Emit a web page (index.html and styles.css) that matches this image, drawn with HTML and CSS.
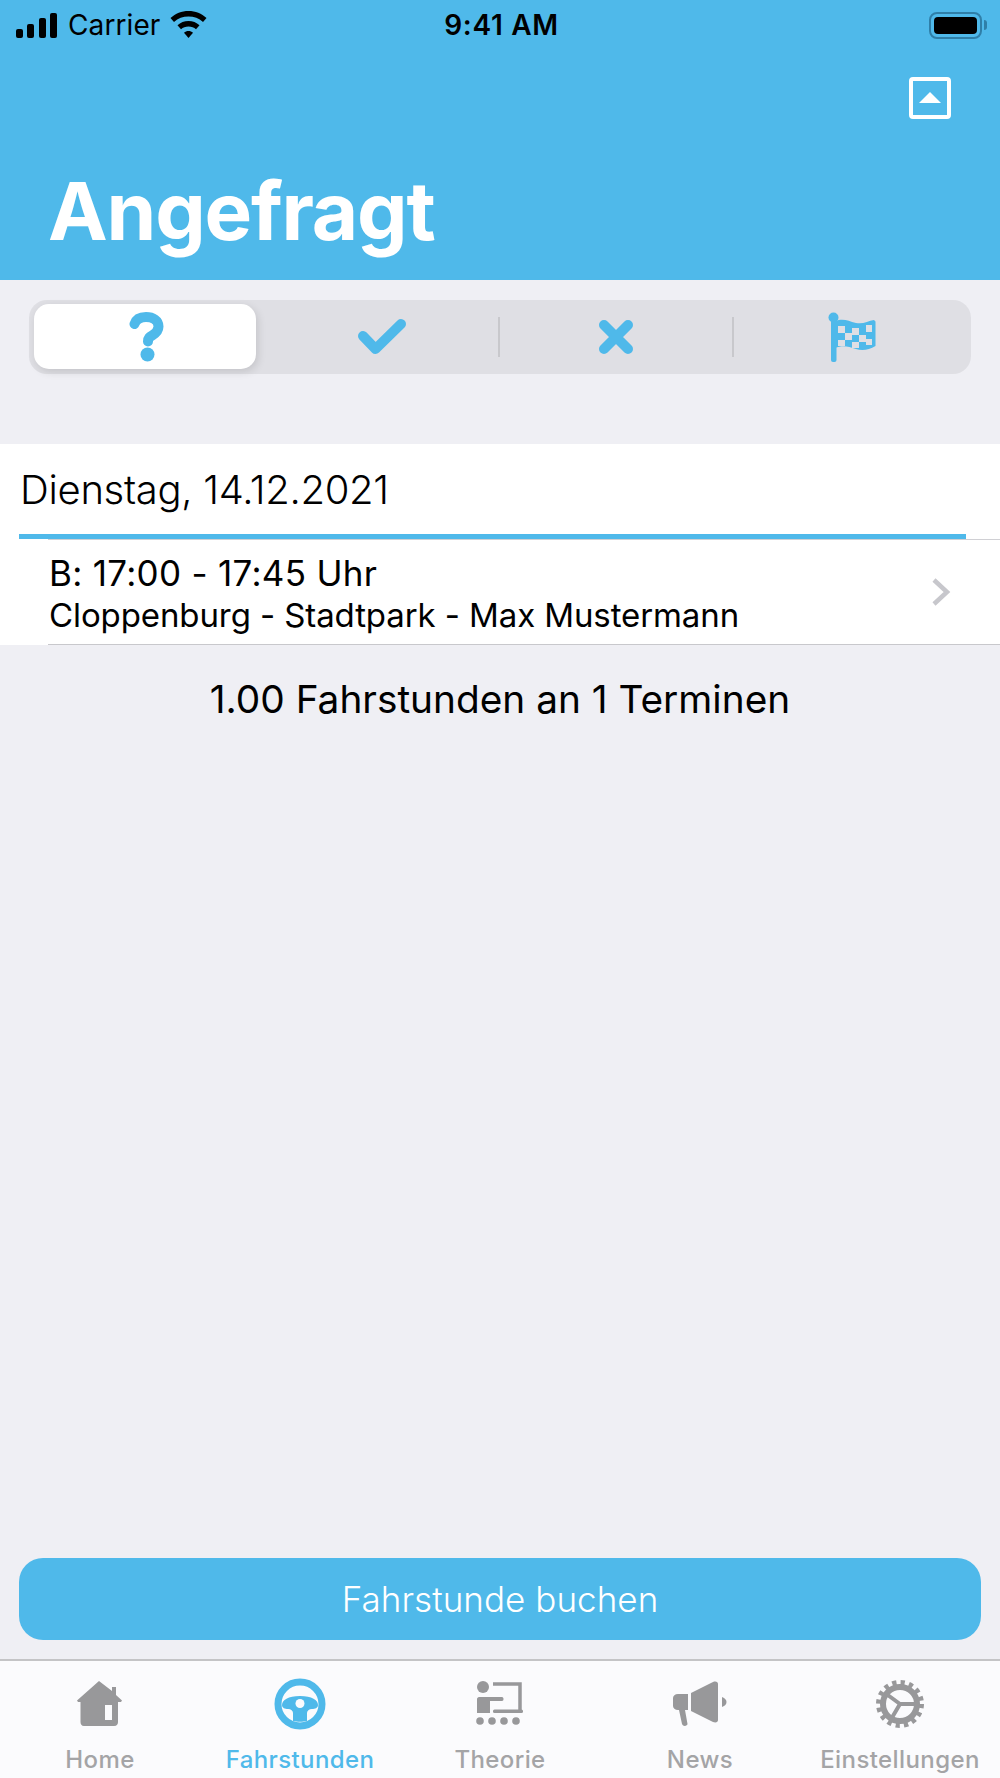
FILE: index.html
```html
<!DOCTYPE html>
<html lang="de">
<head>
  <meta charset="UTF-8">
  <title>Angefragt</title>
  <link rel="stylesheet" href="styles.css">
</head>
<body>
  <div class="app">
    <header class="header">
      <div class="status-bar">
        <div class="status-left">
          <svg class="signal" width="42" height="25" viewBox="0 0 42 25">
            <rect x="0" y="16" width="7" height="9" rx="2"/>
            <rect x="11" y="11" width="7" height="14" rx="2"/>
            <rect x="23" y="5" width="7" height="20" rx="2"/>
            <rect x="34" y="0" width="7" height="25" rx="2"/>
          </svg>
          <span class="carrier">Carrier</span>
          <svg class="wifi" width="37" height="27" viewBox="0 0 37 27">
            <path d="M18.5 0C11.500 0 5.500 2.500 0.500 7L4 11C8 7.300 13 5.500 18.500 5.500S29 7.300 33 11L36.500 7C31.500 2.500 25.500 0 18.500 0Z"/>
            <path d="M18.500 10C14.300 10 10.500 11.500 7.500 14.300L11 18.200C13 16.400 15.500 15.400 18.500 15.400S24 16.400 26 18.200L29.500 14.300C26.500 11.500 22.700 10 18.500 10Z"/>
            <path d="M18.500 20C16.800 20 15.300 20.500 14 21.700L18.500 27L23 21.700C21.700 20.500 20.200 20 18.500 20Z"/>
          </svg>
        </div>
        <div class="clock">9:41 AM</div>
        <div class="status-right">
          <span class="battery"><span class="battery-fill"></span></span>
          <span class="battery-cap"></span>
        </div>
      </div>
      <div class="header-action">
        <span class="collapse-btn"><span class="collapse-arrow"></span></span>
      </div>
      <h1 class="title">Angefragt</h1>
    </header>

    <div class="segments">
      <div class="segment">
        <span class="segment-active"></span>
        <svg class="segment-icon" width="36" height="50" viewBox="0 0 36 50">
          <path d="M5.500 12C7 7.500 11 5 17 5C24 5 29.500 8.500 29.500 14.500C29.500 19 27 21 23.500 23.200C20.500 25 19 26 19 29.500" fill="none" stroke="#4fb9ea" stroke-width="10" stroke-linecap="round"/>
          <circle cx="18.500" cy="42.500" r="7" fill="#4fb9ea"/>
        </svg>
      </div>
      <div class="segment">
        <svg class="segment-icon" width="50" height="38" viewBox="0 0 50 38">
          <path d="M6 18L18.500 31L44 6" fill="none" stroke="#4fb9ea" stroke-width="10" stroke-linecap="round" stroke-linejoin="round"/>
        </svg>
      </div>
      <div class="segment segment-divided">
        <svg class="segment-icon" width="36" height="36" viewBox="0 0 36 36">
          <path d="M6 6L30 30M30 6L6 30" fill="none" stroke="#4fb9ea" stroke-width="10" stroke-linecap="round"/>
        </svg>
      </div>
      <div class="segment segment-divided">
        <svg class="segment-icon flag" width="48" height="50" viewBox="0 0 48 50">
          <circle cx="5.500" cy="5.500" r="5" fill="#4fb9ea"/>
          <rect x="3" y="6" width="5.500" height="44" rx="2" fill="#4fb9ea"/>
          <path d="M7 9C16 6 20 9 28 11C35 12.500 40 9 46 8L47.500 9.500V34C41 38 34 39 28 37C20 34 14 33 7 36Z" fill="#4fb9ea"/>
          <g fill="#dfdfe4">
            <rect x="10" y="14" width="7" height="7"/>
            <rect x="24" y="16" width="7" height="7"/>
            <rect x="38" y="13" width="6" height="7"/>
            <rect x="17" y="21" width="7" height="7"/>
            <rect x="31" y="23" width="7" height="7"/>
            <rect x="10" y="28" width="7" height="6"/>
            <rect x="24" y="30" width="7" height="6"/>
            <rect x="38" y="27" width="6" height="6"/>
          </g>
        </svg>
      </div>
    </div>

    <section class="day">
      <div class="day-title">Dienstag, 14.12.2021</div>
      <div class="day-rule"></div>
      <div class="lesson">
        <div class="lesson-text">
          <div class="lesson-time">B: 17:00 - 17:45 Uhr</div>
          <div class="lesson-place">Cloppenburg - Stadtpark - Max Mustermann</div>
        </div>
        <svg class="chevron" width="20" height="30" viewBox="0 0 20 30">
          <path d="M3 3L16 15L3 27" fill="none" stroke="#c7c7cc" stroke-width="4.500"/>
        </svg>
      </div>
    </section>

    <p class="summary">1.00 Fahrstunden an 1 Terminen</p>

    <div class="book-wrap">
      <button class="book">Fahrstunde buchen</button>
    </div>

    <nav class="tabs">
      <div class="tab">
        <div class="tab-icon">
          <svg width="46" height="46" viewBox="0 0 46 46">
            <path d="M22 0L35 10V6H39V14L45 19.500L44 21H41V41C41 43 40 45 37 45H7C4.500 45 3.500 43 3.500 41V21H1L0 19.500Z" fill="#98989a"/>
            <rect x="28" y="24" width="7" height="15" fill="#fbfbfd"/>
          </svg>
        </div>
        <span>Home</span>
      </div>
      <div class="tab tab-active">
        <div class="tab-icon">
          <svg width="52" height="52" viewBox="0 0 52 52">
            <circle cx="26" cy="26" r="22" fill="none" stroke="#4fb9ea" stroke-width="7"/>
            <path d="M8 27C8 22 14 18 26 18S44 22 44 27C44 30 41 31 38 31C35 31 33 33 33 35V43C29 44 23 44 19 43V35C19 33 17 31 14 31C11 31 8 30 8 27Z" fill="#4fb9ea"/>
            <circle cx="26" cy="25.500" r="4.500" fill="#fbfbfd"/>
          </svg>
        </div>
        <span>Fahrstunden</span>
      </div>
      <div class="tab">
        <div class="tab-icon">
          <svg width="48" height="46" viewBox="0 0 48 46">
            <circle cx="7" cy="6" r="6" fill="#98989a"/>
            <path d="M17 3H44V31" fill="none" stroke="#98989a" stroke-width="3.500"/>
            <path d="M3 16H26C28 16 28 20 26 20H14V32H1V18C1 17 2 16 3 16Z" fill="#98989a"/>
            <rect x="17" y="28.500" width="30" height="3.500" rx="1.500" fill="#98989a"/>
            <circle cx="4" cy="40" r="3.800" fill="#98989a"/>
            <circle cx="16" cy="40" r="3.800" fill="#98989a"/>
            <circle cx="28" cy="40" r="3.800" fill="#98989a"/>
            <circle cx="40" cy="40" r="3.800" fill="#98989a"/>
          </svg>
        </div>
        <span>Theorie</span>
      </div>
      <div class="tab">
        <div class="tab-icon">
          <svg width="54" height="46" viewBox="0 0 54 46">
            <path d="M5 13H15V29H12L14.500 43C14.500 45 10 46 9 43L6 29H5C2 29 0 27 0 25V17C0 15 2 13 5 13Z" fill="#98989a"/>
            <path d="M18 12L40 1C43 0 45 1 45 3V39C45 41 43 42 40 41L18 30Z" fill="#98989a"/>
            <path d="M49 16C52 17 53.500 19 53.500 21S52 25 49 26Z" fill="#98989a"/>
          </svg>
        </div>
        <span>News</span>
      </div>
      <div class="tab">
        <div class="tab-icon">
          <svg width="48" height="48" viewBox="0 0 48 48">
            <circle cx="24" cy="24" r="21.500" fill="none" stroke="#98989a" stroke-width="5" stroke-dasharray="4.220 4.220"/>
            <circle cx="24" cy="24" r="17" fill="none" stroke="#98989a" stroke-width="6"/>
            <path d="M24 24L9 13M24 24H42M24 24L14 41" fill="none" stroke="#98989a" stroke-width="4"/>
          </svg>
        </div>
        <span>Einstellungen</span>
      </div>
    </nav>
  </div>
</body>
</html>
```

FILE: styles.css
```css
* {
  box-sizing: border-box;
}

body {
  margin: 0;
  font-family: Inter, "Liberation Sans", sans-serif;
  background: #efeff4;
  color: #000;
}

.app {
  display: flex;
  flex-direction: column;
  height: 1778px;
  overflow: hidden;
}

/* header */
.header {
  height: 280px;
  background: #4fb9ea;
}

.status-bar {
  display: grid;
  grid-template-columns: 1fr auto 1fr;
  align-items: center;
  height: 50px;
  padding: 0 13px 0 16px;
}

.status-left {
  display: flex;
  align-items: center;
  gap: 10px;
}

.signal {
  margin-top: 1px;
}

.wifi {
  margin: -2px 0 0 0;
}

.carrier {
  font-size: 28px;
  letter-spacing: 0.1px;
}

.clock {
  font-size: 28px;
  font-weight: 600;
  letter-spacing: 0.7px;
}

.status-right {
  display: flex;
  align-items: center;
  justify-content: flex-end;
  gap: 2px;
}

.battery {
  width: 53px;
  height: 27px;
  padding: 3px;
  border: 2.500px solid #2f7fa8;
  border-radius: 8px;
}

.battery-fill {
  display: block;
  height: 100%;
  background: #000;
  border-radius: 4px;
}

.battery-cap {
  width: 3px;
  height: 10px;
  background: #2f7fa8;
  border-radius: 0 3px 3px 0;
}

.header-action {
  display: flex;
  justify-content: flex-end;
  padding: 27px 49px 0 0;
}

.collapse-btn {
  display: flex;
  align-items: center;
  justify-content: center;
  width: 42px;
  height: 42px;
  border: 4px solid #fff;
  border-radius: 4px;
}

.collapse-arrow {
  width: 0;
  height: 0;
  margin-bottom: 2px;
  border-left: 11px solid transparent;
  border-right: 11px solid transparent;
  border-bottom: 11px solid #fff;
}

.title {
  margin: 43px 0 0 48px;
  font-size: 80px;
  line-height: 97px;
  font-weight: 700;
  letter-spacing: -1.2px;
  color: #fff;
}

/* segmented control */
.segments {
  display: grid;
  grid-template-columns: 235px 235px 234px 1fr;
  height: 74px;
  margin: 20px 29px 0;
  background: #dfdfe4;
  border-radius: 18px;
}

.segment {
  position: relative;
  display: flex;
  align-items: center;
  justify-content: center;
}

.segment-divided::before {
  content: "";
  position: absolute;
  left: -1px;
  top: 17px;
  bottom: 17px;
  width: 2px;
  background: #c8c8cc;
}

.segment-active {
  position: absolute;
  left: 5px;
  right: 8px;
  top: 4px;
  bottom: 5px;
  background: #fff;
  border-radius: 15px;
  box-shadow: 2px 3px 8px rgba(0, 0, 0, 0.12);
}

.segment-icon {
  position: relative;
}

/* day section */
.day {
  margin-top: 70px;
  background: #fff;
}

.day-title {
  height: 90px;
  padding: 21px 0 0 20px;
  font-size: 40px;
  line-height: 50px;
  font-weight: 300;
  letter-spacing: -0.3px;
}

.day-rule {
  height: 5px;
  margin: 0 34px 0 19px;
  background: #4fb9ea;
}

.lesson {
  display: flex;
  align-items: center;
  justify-content: space-between;
  height: 106px;
  margin-left: 48px;
  padding-right: 49px;
  border-top: 1px solid #d0d0d4;
  border-bottom: 1px solid #c8c8cc;
}

.lesson-text {
  padding: 3px 0 0 1px;
}

.lesson-time {
  font-size: 35px;
  line-height: 42px;
  letter-spacing: 0.3px;
}

.lesson-place {
  font-size: 33px;
  line-height: 42px;
  letter-spacing: -0.1px;
}

.summary {
  margin: 23px 0 0;
  font-size: 38.800px;
  line-height: 62px;
  text-align: center;
}

/* booking button */
.book-wrap {
  margin-top: auto;
  padding: 0 19px 19px;
}

.book {
  display: block;
  width: 100%;
  height: 82px;
  border: none;
  border-radius: 24px;
  background: #4fb9ea;
  color: #fff;
  font-family: inherit;
  font-size: 35px;
  font-weight: 300;
  letter-spacing: 0.05px;
}

/* tab bar */
.tabs {
  display: grid;
  grid-template-columns: repeat(5, 1fr);
  height: 119px;
  background: #fbfbfd;
  border-top: 2px solid #c4c4c6;
}

.tab {
  display: flex;
  flex-direction: column;
  align-items: center;
  padding-top: 16px;
  color: #a4a4a6;
  font-size: 24px;
  line-height: 34px;
  font-weight: 500;
  letter-spacing: 0.4px;
}

.tab-icon {
  display: flex;
  align-items: center;
  height: 54px;
  margin-bottom: 12px;
}

.tab-active {
  color: #4fb9ea;
}
```
